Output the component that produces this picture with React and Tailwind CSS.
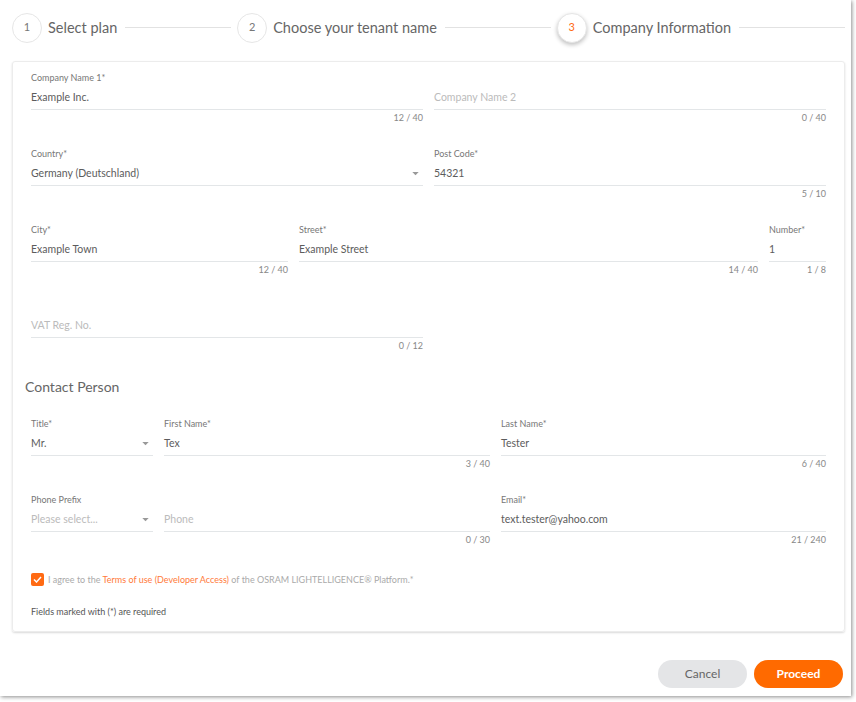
import React from 'react';

const font = { fontFamily: 'Lato, "Open Sans", sans-serif' };

function Field({ label, value, placeholder, counter, select, className = '' }) {
  return (
    <div className={`flex flex-col ${className}`}>
      <div className="h-[12px] text-[9px] leading-[12px] text-[#777]">{label || '\u00a0'}</div>
      <div className="h-[26px] pt-[2px] border-b border-[#e3e6e8] flex items-center justify-between">
        {value ? (
          <span className="text-[10.5px] text-[#5c5c5c]">{value}</span>
        ) : (
          <span className="text-[10.5px] text-[#bbb]">{placeholder}</span>
        )}
        {select && (
          <svg width="7" height="4" viewBox="0 0 8 5" className="mr-[4px]">
            <path d="M0 0h8L4 4z" fill="#999" />
          </svg>
        )}
      </div>
      <div className="h-[16px] text-[9px] leading-[16px] text-[#888] text-right">{counter || '\u00a0'}</div>
    </div>
  );
}

function Step({ n, label, active }) {
  return (
    <>
      <div
        className={`w-[30px] h-[30px] rounded-full border border-[#e6e6e6] flex items-center justify-center text-[11px] shrink-0 bg-white ${
          active ? 'text-[#ff6a13] shadow-[0_2px_4px_rgba(0,0,0,0.25)]' : 'text-[#777]'
        }`}
      >
        {n}
      </div>
      <span className="ml-[6px] text-[14.5px] text-[#666] whitespace-nowrap">{label}</span>
      <div className="flex-1 h-px bg-[#e2e2e2] ml-[8px] mr-[6px]" />
    </>
  );
}

export default function App() {
  return (
    <div className="w-[856px] h-[702px] bg-white" style={font}>
      <div className="w-[851px] h-[696px] bg-white shadow-[1px_1px_4px_rgba(0,0,0,0.45)] flex flex-col">
        {/* stepper */}
        <div className="h-[55px] flex items-center pl-[12px] pr-0">
          <Step n="1" label="Select plan" />
          <Step n="2" label="Choose your tenant name" />
          <Step n="3" label="Company Information" active />
        </div>

        {/* form card */}
        <div className="ml-[12px] mr-[6px] mt-[6px] border border-[#ececec] rounded-[3px] shadow-[0_1px_2px_rgba(0,0,0,0.15)] px-[18px] pt-[10px] pb-[12px] h-[571px] flex flex-col">
          <div className="flex gap-[11px]">
            <Field className="w-[392px]" label="Company Name 1*" value="Example Inc." counter="12 / 40" />
            <Field className="flex-1" placeholder="Company Name 2" counter="0 / 40" />
          </div>
          <div className="flex gap-[11px] mt-[22px]">
            <Field className="w-[392px]" label="Country*" value="Germany (Deutschland)" select />
            <Field className="flex-1" label="Post Code*" value="54321" counter="5 / 10" />
          </div>
          <div className="flex gap-[11px] mt-[22px]">
            <Field className="w-[257px]" label="City*" value="Example Town" counter="12 / 40" />
            <Field className="flex-1" label="Street*" value="Example Street" counter="14 / 40" />
            <Field className="w-[57px]" label="Number*" value="1" counter="1 / 8" />
          </div>
          <div className="flex gap-[11px] mt-[22px]">
            <Field className="w-[392px]" placeholder="VAT Reg. No." counter="0 / 12" />
          </div>

          <div className="mt-[24px] -ml-[6px] text-[14px] leading-[18px] text-[#666]">Contact Person</div>

          <div className="flex gap-[11px] mt-[22px]">
            <Field className="w-[122px]" label="Title*" value="Mr." select />
            <Field className="w-[326px]" label="First Name*" value="Tex" counter="3 / 40" />
            <Field className="flex-1" label="Last Name*" value="Tester" counter="6 / 40" />
          </div>
          <div className="flex gap-[11px] mt-[22px]">
            <Field className="w-[122px]" label="Phone Prefix" placeholder="Please select..." select />
            <Field className="w-[326px]" placeholder="Phone" counter="0 / 30" />
            <Field className="flex-1" label="Email*" value="text.tester@yahoo.com" counter="21 / 240" />
          </div>

          <div className="flex items-center mt-[25px]">
            <div className="w-[13px] h-[13px] rounded-[2px] bg-[#ff6a13] flex items-center justify-center">
              <svg width="9" height="7" viewBox="0 0 9 7">
                <path d="M1 3.5L3.5 6L8 1" stroke="white" strokeWidth="1.5" fill="none" />
              </svg>
            </div>
            <span className="ml-[4px] text-[9px] text-[#aaa]">
              I agree to the <span className="text-[#ff7a3a]">Terms of use (Developer Access)</span> of the OSRAM LIGHTELLIGENCE® Platform.*
            </span>
          </div>
          <div className="mt-[18px] text-[9px] text-[#555]">Fields marked with (*) are required</div>
        </div>

        {/* buttons */}
        <div className="flex justify-end gap-[7px] pr-[8px] mt-[28px]">
          <button className="w-[89px] h-[28px] rounded-full bg-[#e4e5e7] text-[12px] text-[#666]">Cancel</button>
          <button className="w-[89px] h-[28px] rounded-full bg-[#ff6a00] text-[12px] font-bold text-white">Proceed</button>
        </div>
      </div>
    </div>
  );
}
